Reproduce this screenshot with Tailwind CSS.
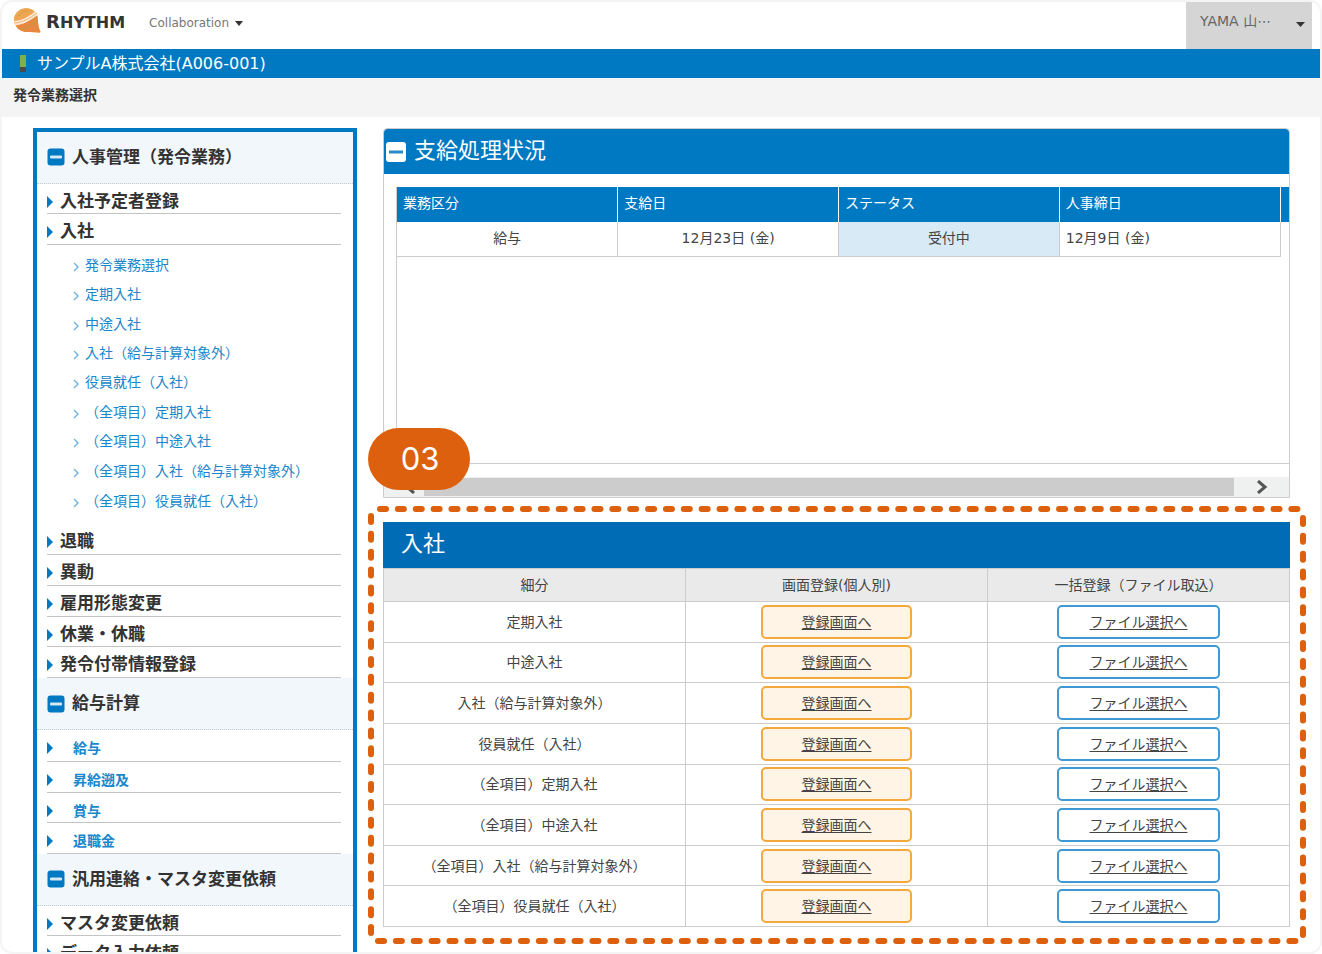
<!DOCTYPE html>
<html lang="ja">
<head>
<meta charset="utf-8">
<meta name="viewport" content="width=device-width, initial-scale=1">
<title>発令業務選択</title>
<script src="https://cdn.jsdelivr.net/npm/@tailwindcss/browser@4"></script>
</head>
<body class="h-screen overflow-hidden bg-white font-['DejaVu_Sans','Noto_Sans_CJK_JP',sans-serif] text-sm text-[#444]">
<svg class="hidden" aria-hidden="true">
  <symbol id="tri" viewBox="0 0 6 12"><path d="M0 0L6 6L0 12Z" fill="#0079c3"/></symbol>
  <symbol id="chev" viewBox="0 0 6 10"><path d="M1 1L5 5L1 9" fill="none" stroke="#6fb2de" stroke-width="1.4"/></symbol>
  <symbol id="minus" viewBox="0 0 18 18"><rect x="0.5" y="0.5" width="17" height="17" rx="3" fill="#0079c3"/><rect x="3" y="7.5" width="12" height="3" rx="1" fill="#d5e8f5"/></symbol>
</svg>
<div class="h-full overflow-hidden rounded-xl border-2 border-[#f4f4f4]">
  <header class="flex h-[47px] items-start pl-[11px]">
    <a href="#" class="flex items-start pt-1 text-[#333]" aria-label="Rhythm">
      <svg class="mt-px h-[28px] w-[29px]" viewBox="0 0 29 28" aria-hidden="true">
        <path d="M1 11C2 5 8 1 13 1C19 1 24 5 24.5 10C25 14 25 19 27.500 24.500L27 26L17 25C8 26 2 20 1 14Z" fill="#f0a552"/>
        <path d="M3 19C9 18 18 13 24 8C26 15 24 20 27.500 25L17 25C10 25.500 5 23 3 19Z" fill="#e88742"/>
        <path d="M8 22C14 21 20 17 24 13M6 9C9 5 12 4 16 4" fill="none" stroke="#a3a545" stroke-width="1.200" stroke-dasharray="1.200 1.800"/>
        <path d="M1 14C8 14 17 9 23 4L24.500 8C17 14 9 18 2.500 18Z" fill="#fdebd8"/>
        <path d="M1.500 16C9 16 17 11 24 6" fill="none" stroke="#e9a15b" stroke-width="0.800"/>
      </svg>
      <span class="ml-1 pt-1.5 text-base leading-5 font-bold"><span class="text-lg leading-5">R</span>HYTHM</span>
    </a>
    <button type="button" class="ml-6 flex items-center gap-1.5 pt-3 text-xs leading-[18px] text-[#777]">Collaboration
      <svg class="h-[5px] w-2" viewBox="0 0 8 5" aria-hidden="true"><path d="M0 0H8L4 5Z" fill="#333"/></svg>
    </button>
    <button type="button" class="mr-2 ml-auto flex h-full w-[126px] items-start justify-between bg-[#d5d5d5] pt-2.5 pr-[7px] pl-3.5 text-sm leading-[18px] text-[#666]"><span>YAMA 山⋯</span>
      <svg class="mt-2.5 h-[5px] w-[9px]" viewBox="0 0 9 5" aria-hidden="true"><path d="M0 0H9L4.500 5Z" fill="#333"/></svg>
    </button>
  </header>
  <div class="flex h-[29px] items-center bg-[#0079c3] pl-[18px] text-base text-white">
    <span class="mr-[11px] flex w-1.5 flex-col"><span class="h-3 bg-[#7fb04f]"></span><span class="h-[5px] bg-[#4a4a4a]"></span></span>
    <p class="leading-6">サンプルA株式会社(A006-001)</p>
  </div>
  <h1 class="h-[39px] bg-[#f4f4f4] pt-[7px] pl-[11px] text-sm leading-5 font-bold text-[#333]">発令業務選択</h1>

  <div class="flex items-start gap-[26px] pt-[11px] pr-[30px] pl-[31px]">
    <nav class="w-[324px] shrink-0 border-4 border-[#0079c3] text-[#333]" aria-label="業務メニュー">
      <h2 class="flex h-[52px] items-center border-b border-dotted border-[#c4c8cc] bg-[#f2f7fc] pb-px pl-2.5 text-[17px] font-bold"><button type="button" aria-label="人事管理を閉じる" class="mr-[7px]"><svg class="size-[18px]"><use href="#minus"/></svg></button>人事管理（発令業務）</h2>
      <ul class="mr-3 ml-2.5 text-[17px] leading-[35px] font-bold">
        <li class="h-[30px] border-b border-[#c4c4c4]"><a href="#" class="flex items-center gap-[7px]"><svg class="h-3 w-1.5"><use href="#tri"/></svg>入社予定者登録</a></li>
        <li><div class="h-[31px] border-b border-[#c4c4c4]"><a href="#" class="flex items-center gap-[7px]"><svg class="h-3 w-1.5"><use href="#tri"/></svg>入社</a></div>
          <ul class="pt-[5px] pb-[9px] pl-[26px] text-sm leading-[31px] font-normal text-[#1a86cb]">
            <li class="h-[29px]"><a href="#" class="flex items-center gap-1.5"><svg class="mt-0.5 h-2.5 w-1.5"><use href="#chev"/></svg>発令業務選択</a></li>
            <li class="h-[30px]"><a href="#" class="flex items-center gap-1.5"><svg class="mt-0.5 h-2.5 w-1.5"><use href="#chev"/></svg>定期入社</a></li>
            <li class="h-[29px]"><a href="#" class="flex items-center gap-1.5"><svg class="mt-0.5 h-2.5 w-1.5"><use href="#chev"/></svg>中途入社</a></li>
            <li class="h-[29px]"><a href="#" class="flex items-center gap-1.5"><svg class="mt-0.5 h-2.5 w-1.5"><use href="#chev"/></svg>入社（給与計算対象外）</a></li>
            <li class="h-[30px]"><a href="#" class="flex items-center gap-1.5"><svg class="mt-0.5 h-2.5 w-1.5"><use href="#chev"/></svg>役員就任（入社）</a></li>
            <li class="h-[29px]"><a href="#" class="flex items-center gap-1.5"><svg class="mt-0.5 h-2.5 w-1.5"><use href="#chev"/></svg>（全項目）定期入社</a></li>
            <li class="h-[30px]"><a href="#" class="flex items-center gap-1.5"><svg class="mt-0.5 h-2.5 w-1.5"><use href="#chev"/></svg>（全項目）中途入社</a></li>
            <li class="h-[30px]"><a href="#" class="flex items-center gap-1.5"><svg class="mt-0.5 h-2.5 w-1.5"><use href="#chev"/></svg>（全項目）入社（給与計算対象外）</a></li>
            <li class="h-[29px]"><a href="#" class="flex items-center gap-1.5"><svg class="mt-0.5 h-2.5 w-1.5"><use href="#chev"/></svg>（全項目）役員就任（入社）</a></li>
          </ul>
        </li>
        <li class="h-[31px] border-b border-[#c4c4c4]"><a href="#" class="flex items-center gap-[7px]"><svg class="h-3 w-1.5"><use href="#tri"/></svg>退職</a></li>
        <li class="h-[31px] border-b border-[#c4c4c4]"><a href="#" class="flex items-center gap-[7px]"><svg class="h-3 w-1.5"><use href="#tri"/></svg>異動</a></li>
        <li class="h-[31px] border-b border-[#c4c4c4]"><a href="#" class="flex items-center gap-[7px]"><svg class="h-3 w-1.5"><use href="#tri"/></svg>雇用形態変更</a></li>
        <li class="h-[30px] border-b border-[#c4c4c4]"><a href="#" class="flex items-center gap-[7px]"><svg class="h-3 w-1.5"><use href="#tri"/></svg>休業・休職</a></li>
        <li class="h-[31px] border-b border-[#c4c4c4]"><a href="#" class="flex items-center gap-[7px]"><svg class="h-3 w-1.5"><use href="#tri"/></svg>発令付帯情報登録</a></li>
      </ul>
      <h2 class="flex h-[52px] items-center border-b border-dotted border-[#c4c8cc] bg-[#f2f7fc] pl-2.5 text-[17px] font-bold"><button type="button" aria-label="給与計算を閉じる" class="mr-[7px]"><svg class="size-[18px]"><use href="#minus"/></svg></button>給与計算</h2>
      <ul class="mr-3 ml-2.5 text-sm leading-9 font-bold text-[#1a86cb]">
        <li class="h-8 border-b border-[#c4c4c4]"><a href="#" class="flex items-center gap-5"><svg class="h-3 w-1.5"><use href="#tri"/></svg>給与</a></li>
        <li class="h-[31px] border-b border-[#c4c4c4]"><a href="#" class="flex items-center gap-5"><svg class="h-3 w-1.5"><use href="#tri"/></svg>昇給遡及</a></li>
        <li class="h-[30px] border-b border-[#c4c4c4]"><a href="#" class="flex items-center gap-5"><svg class="h-3 w-1.5"><use href="#tri"/></svg>賞与</a></li>
        <li class="h-[31px] border-b border-[#c4c4c4]"><a href="#" class="flex items-center gap-5"><svg class="h-3 w-1.5"><use href="#tri"/></svg>退職金</a></li>
      </ul>
      <h2 class="flex h-[52px] items-center border-b border-dotted border-[#c4c8cc] bg-[#f2f7fc] pb-px pl-2.5 text-[17px] font-bold"><button type="button" aria-label="汎用連絡を閉じる" class="mr-[7px]"><svg class="size-[18px]"><use href="#minus"/></svg></button>汎用連絡・マスタ変更依頼</h2>
      <ul class="mr-3 ml-2.5 text-[17px] leading-[35px] font-bold">
        <li class="h-[30px] border-b border-[#c4c4c4]"><a href="#" class="flex items-center gap-[7px]"><svg class="h-3 w-1.5"><use href="#tri"/></svg>マスタ変更依頼</a></li>
        <li class="h-[31px] border-b border-[#c4c4c4]"><a href="#" class="flex items-center gap-[7px]"><svg class="h-3 w-1.5"><use href="#tri"/></svg>データ入力依頼</a></li>
      </ul>
    </nav>

    <main class="min-w-0 flex-1">
      <section class="relative rounded-t border border-[#ccc]">
        <h2 class="flex h-[45px] items-center gap-2 rounded-t bg-[#0079c3] pl-0.5 text-[22px] text-white">
          <button type="button" aria-label="支給処理状況を閉じる"><svg class="size-5" viewBox="0 0 20 20"><rect width="20" height="20" rx="3" fill="#fff"/><rect x="3" y="8.500" width="14" height="3" fill="#2a8bcb"/></svg></button><span class="pb-0.5 leading-10">支給処理状況</span>
        </h2>
        <div class="mt-[13px] ml-3 h-[277px] border-b border-l border-[#ccc]">
          <table class="w-full table-fixed border-collapse">
            <colgroup><col><col><col><col><col class="w-[9px]"></colgroup>
            <thead>
              <tr class="h-[35px] bg-[#0079c3] text-left text-white">
                <th class="border-r border-white pb-1 pl-1.5 font-normal">業務区分</th>
                <th class="border-r border-white pb-1 pl-1.5 font-normal">支給日</th>
                <th class="border-r border-white pb-1 pl-1.5 font-normal">ステータス</th>
                <th class="border-r border-white pb-1 pl-1.5 font-normal">人事締日</th>
                <td></td>
              </tr>
            </thead>
            <tbody>
              <tr class="h-[34px] text-center">
                <td class="border-r border-b border-[#ccc] pb-0.5">給与</td>
                <td class="border-r border-b border-[#ccc] pb-0.5">12月23日 (金)</td>
                <td class="border-r border-b border-[#ccc] bg-[#d9eaf7] pb-0.5">受付中</td>
                <td class="border-r border-b border-[#ccc] pb-0.5 pl-1.5 text-left">12月9日 (金)</td>
                <td></td>
              </tr>
            </tbody>
          </table>
        </div>
        <div class="mt-[13px] flex h-5 items-center bg-[#eff1f1]">
          <button type="button" aria-label="左へスクロール" class="flex w-10 justify-end pr-2"><svg class="h-3.5 w-3" viewBox="0 0 12 14"><path d="M10 1L3 7L10 13" fill="none" stroke="#555" stroke-width="3"/></svg></button>
          <span class="h-[18px] flex-1 bg-[#ccc]"></span>
          <button type="button" aria-label="右へスクロール" class="flex w-[55px] justify-center"><svg class="h-3.5 w-3" viewBox="0 0 12 14"><path d="M2 1L9 7L2 13" fill="none" stroke="#555" stroke-width="3"/></svg></button>
        </div>
        <span class="absolute top-[299px] -left-4 flex h-[62px] w-[102px] items-center justify-center rounded-[31px] bg-[#dc600e] pl-0.5 font-[Inter,sans-serif] text-[31px] text-white">03</span>
      </section>

      <section class="relative mt-6">
        <h2 class="h-[46px] bg-[#006cb6] pl-[18px] text-[22px] leading-[44px] text-white">入社</h2>
        <table class="h-[359px] w-full table-fixed border-collapse text-center leading-5 [&_td]:border [&_td]:border-[#ccc] [&_th]:border [&_th]:border-[#ccc] [&_th]:font-normal">
          <thead><tr class="h-[33px] bg-[#eaeaea]"><th>細分</th><th>画面登録(個人別)</th><th>一括登録（ファイル取込）</th></tr></thead>
          <tbody id="rows"></tbody>
        </table>
        <!-- dashed highlight frame -->
        <svg class="pointer-events-none absolute -top-[13px] -left-3 h-[calc(100%+27px)] w-[calc(100%+25px)] overflow-visible" fill="none" stroke="#dc600e" stroke-width="6" stroke-linecap="round" stroke-dasharray="6 11.87" aria-hidden="true">
          <svg x="9" width="100%" height="100%" overflow="visible"><line x1="0" y1="0" x2="99%" y2="0"/></svg>
          <svg y="7" width="100%" height="100%" overflow="visible"><line x1="0" y1="0" x2="0" y2="97%"/></svg>
          <svg y="9" width="100%" height="100%" overflow="visible"><line x1="100%" y1="0" x2="100%" y2="97%"/></svg>
          <svg x="7" width="100%" height="100%" overflow="visible"><line x1="0" y1="100%" x2="99%" y2="100%"/></svg>
        </svg>
      </section>
    </main>
  </div>
</div>
<script>
  const names = ['定期入社', '中途入社', '入社（給与計算対象外）', '役員就任（入社）', '（全項目）定期入社', '（全項目）中途入社', '（全項目）入社（給与計算対象外）', '（全項目）役員就任（入社）'];
  document.getElementById('rows').innerHTML = names.map(n => `
    <tr class="h-10"><td>${n}</td>
      <td><a href="#" class="mx-auto flex h-[34px] w-[151px] items-center justify-center rounded-[5px] border-2 border-[#f5a83c] bg-[#fff4e5] underline underline-offset-2">登録画面へ</a></td>
      <td><a href="#" class="mx-auto flex h-[34px] w-[163px] items-center justify-center rounded-[5px] border-2 border-[#3f99d3] bg-white underline underline-offset-2">ファイル選択へ</a></td>
    </tr>`).join('');
</script>
</body>
</html>
